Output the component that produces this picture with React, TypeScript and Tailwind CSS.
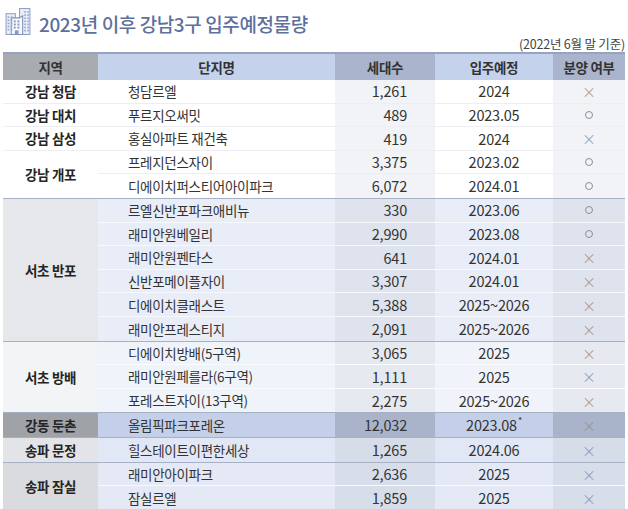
import React from "react";

type Row = { name: string; count: string; date: React.ReactNode; sale: "o" | "x" };
type Sub = { region: string; rows: Row[] };
type Theme = {
  region: string;
  name: string;
  count: string;
  date: string;
  sale: string;
  sep: string;
};
type Group = { theme: Theme; subs: Sub[] };

const light: Theme = {
  region: "bg-[#ffffff]",
  name: "bg-[#ffffff]",
  count: "bg-[#f1f3f7]",
  date: "bg-[#ffffff]",
  sale: "bg-[#f1f3f7]",
  sep: "border-[#eceef3]",
};
const dark: Theme = {
  region: "bg-[#e6e7ea]",
  name: "bg-[#e8edf7]",
  count: "bg-[#dee3ed]",
  date: "bg-[#e8edf7]",
  sale: "bg-[#dee3ed]",
  sep: "border-[#f7f9fc]",
};
const light2: Theme = {
  region: "bg-[#f3f4f6]",
  name: "bg-[#eff3fa]",
  count: "bg-[#e6e9f0]",
  date: "bg-[#f0f3fa]",
  sale: "bg-[#e6e9f0]",
  sep: "border-[#fbfcfe]",
};
const hl: Theme = {
  region: "bg-[#9fa2a7]",
  name: "bg-[#c4d0e9]",
  count: "bg-[#a9b4cb]",
  date: "bg-[#c4d0e9]",
  sale: "bg-[#a9b4cb]",
  sep: "border-[#c4d0e9]",
};
const mid: Theme = {
  region: "bg-[#e3e4e7]",
  name: "bg-[#e1e7f4]",
  count: "bg-[#d6dce8]",
  date: "bg-[#e1e7f4]",
  sale: "bg-[#d6dce8]",
  sep: "border-[#f7f9fc]",
};
const dark2: Theme = {
  region: "bg-[#dadbde]",
  name: "bg-[#e4e9f5]",
  count: "bg-[#d8dee9]",
  date: "bg-[#e4e9f5]",
  sale: "bg-[#d8dee9]",
  sep: "border-[#f7f9fc]",
};

const Star = () => (
  <span className="flex items-start">
    <span>2023.08</span>
    <span className="text-[9px] leading-[9px] ml-[1px] mt-[2px]">*</span>
  </span>
);

const groups: Group[] = [
  {
    theme: light,
    subs: [
      { region: "강남 청담", rows: [{ name: "청담르엘", count: "1,261", date: "2024", sale: "x" }] },
      { region: "강남 대치", rows: [{ name: "푸르지오써밋", count: "489", date: "2023.05", sale: "o" }] },
      { region: "강남 삼성", rows: [{ name: "홍실아파트 재건축", count: "419", date: "2024", sale: "x" }] },
      {
        region: "강남 개포",
        rows: [
          { name: "프레지던스자이", count: "3,375", date: "2023.02", sale: "o" },
          { name: "디에이치퍼스티어아이파크", count: "6,072", date: "2024.01", sale: "o" },
        ],
      },
    ],
  },
  {
    theme: dark,
    subs: [
      {
        region: "서초 반포",
        rows: [
          { name: "르엘신반포파크애비뉴", count: "330", date: "2023.06", sale: "o" },
          { name: "래미안원베일리", count: "2,990", date: "2023.08", sale: "o" },
          { name: "래미안원펜타스", count: "641", date: "2024.01", sale: "x" },
          { name: "신반포메이플자이", count: "3,307", date: "2024.01", sale: "x" },
          { name: "디에이치클래스트", count: "5,388", date: "2025~2026", sale: "x" },
          { name: "래미안프레스티지", count: "2,091", date: "2025~2026", sale: "x" },
        ],
      },
    ],
  },
  {
    theme: light2,
    subs: [
      {
        region: "서초 방배",
        rows: [
          { name: "디에이치방배(5구역)", count: "3,065", date: "2025", sale: "x" },
          { name: "래미안원페를라(6구역)", count: "1,111", date: "2025", sale: "x" },
          { name: "포레스트자이(13구역)", count: "2,275", date: "2025~2026", sale: "x" },
        ],
      },
    ],
  },
  {
    theme: hl,
    subs: [
      { region: "강동 둔촌", rows: [{ name: "올림픽파크포레온", count: "12,032", date: <Star />, sale: "x" }] },
    ],
  },
  {
    theme: mid,
    subs: [
      { region: "송파 문정", rows: [{ name: "힐스테이트이편한세상", count: "1,265", date: "2024.06", sale: "x" }] },
    ],
  },
  {
    theme: dark2,
    subs: [
      {
        region: "송파 잠실",
        rows: [
          { name: "래미안아이파크", count: "2,636", date: "2025", sale: "x" },
          { name: "잠실르엘", count: "1,859", date: "2025", sale: "x" },
        ],
      },
    ],
  },
];

const KR = "font-['Noto_Sans_CJK_KR','Noto_Sans',sans-serif]";
const ROW_H = "h-[23.6px]";

function Mark({ v }: { v: "o" | "x" }) {
  if (v === "o")
    return <span className="inline-block w-[8px] h-[8px] rounded-full border border-[#8d8f94]" />;
  return <span className="text-[14px] leading-none text-[#8d8f94] font-light">×</span>;
}

function BuildingIcon() {
  return (
    <svg width="26" height="27" viewBox="0 0 24 26" fill="none">
      <rect x="0.5" y="5.5" width="9" height="20" fill="#e9eef7" stroke="#8fa1c4" />
      <rect x="13.5" y="0.5" width="10" height="25" fill="#e9eef7" stroke="#8fa1c4" />
      <path d="M5.5 25.5V9.5H13.5L16.5 7.5V25.5Z" fill="#f5f7fb" stroke="#7f92b9" />
      {[2, 5].map((x) =>
        [8, 11, 14, 17, 20].map((y) => (
          <rect key={`l${x}${y}`} x={x} y={y} width="1.6" height="1.6" fill="#9aaacb" />
        ))
      )}
      {[18, 21].map((x) =>
        [3, 6, 9, 12, 15, 18, 21].map((y) => (
          <rect key={`r${x}${y}`} x={x} y={y} width="1.6" height="1.6" fill="#9aaacb" />
        ))
      )}
      {[8, 11.5].map((x) =>
        [12, 15, 18].map((y) => (
          <rect key={`m${x}${y}`} x={x} y={y} width="1.8" height="1.8" fill="#8799bf" />
        ))
      )}
      <rect x="9" y="21.5" width="3.5" height="4" fill="#8799bf" />
    </svg>
  );
}

export default function App() {
  return (
    <div className={`w-[628px] h-[509px] bg-white overflow-hidden ${KR}`}>
      <div className="flex items-end h-[35px] pl-[5px] gap-[8px]">
        <BuildingIcon />
        <span className="text-[19px] leading-[22px] tracking-[-0.4px] font-medium text-[#5e709c] pb-[0px]">
          2023년 이후 강남3구 입주예정물량
        </span>
      </div>
      <div className="h-[17px] flex items-center justify-end pr-[3px] pt-[2px]">
        <span className="text-[12.5px] leading-none text-[#444] tracking-[-0.2px]">(2022년 6월 말 기준)</span>
      </div>
      <div className="ml-[3px] w-[622px] text-[#333]">
        <div className="flex h-[28px] border-t-2 border-[#97a4c0] text-[13.5px] tracking-[-0.3px] font-bold text-[#333]">
          <div className="w-[95px] bg-[#a8abb0] flex items-center justify-center">지역</div>
          <div className="w-[237px] bg-[#c5d2eb] flex items-center justify-center">단지명</div>
          <div className="w-[100px] bg-[#aab5cd] flex items-center justify-center">세대수</div>
          <div className="w-[118px] bg-[#c5d2eb] flex items-center justify-center">입주예정</div>
          <div className="w-[72px] bg-[#aab5cd] flex items-center justify-center">분양 여부</div>
        </div>
        {groups.map((g, gi) => (
          <div key={gi} className="border-b border-[#a7b1c6]">
            {g.subs.map((s, si) => {
              const lastSub = si === g.subs.length - 1;
              return (
                <div key={si} className="flex">
                  <div
                    className={`w-[95px] shrink-0 flex items-center justify-center font-bold text-[13.5px] tracking-[-0.3px] text-[#252525] ${g.theme.region} ${
                      lastSub ? "" : `border-b ${g.theme.sep}`
                    }`}
                  >
                    {s.region}
                  </div>
                  <div className="flex flex-col">
                    {s.rows.map((r, ri) => {
                      const lastRow = lastSub && ri === s.rows.length - 1;
                      return (
                        <div
                          key={ri}
                          className={`flex ${ROW_H} ${lastRow ? "h-[22.6px]" : `border-b ${g.theme.sep}`}`}
                        >
                          <div
                            className={`w-[237px] flex items-center pl-[30px] text-[13.5px] tracking-[-0.3px] ${g.theme.name}`}
                          >
                            {r.name}
                          </div>
                          <div
                            className={`w-[100px] flex items-center justify-end pr-[28px] text-[14.5px] tracking-[-0.2px] ${g.theme.count}`}
                          >
                            {r.count}
                          </div>
                          <div
                            className={`w-[118px] flex items-center justify-center text-[14.5px] tracking-[-0.2px] ${g.theme.date}`}
                          >
                            {r.date}
                          </div>
                          <div className={`w-[72px] flex items-center justify-center ${g.theme.sale}`}>
                            <Mark v={r.sale} />
                          </div>
                        </div>
                      );
                    })}
                  </div>
                </div>
              );
            })}
          </div>
        ))}
      </div>
    </div>
  );
}
